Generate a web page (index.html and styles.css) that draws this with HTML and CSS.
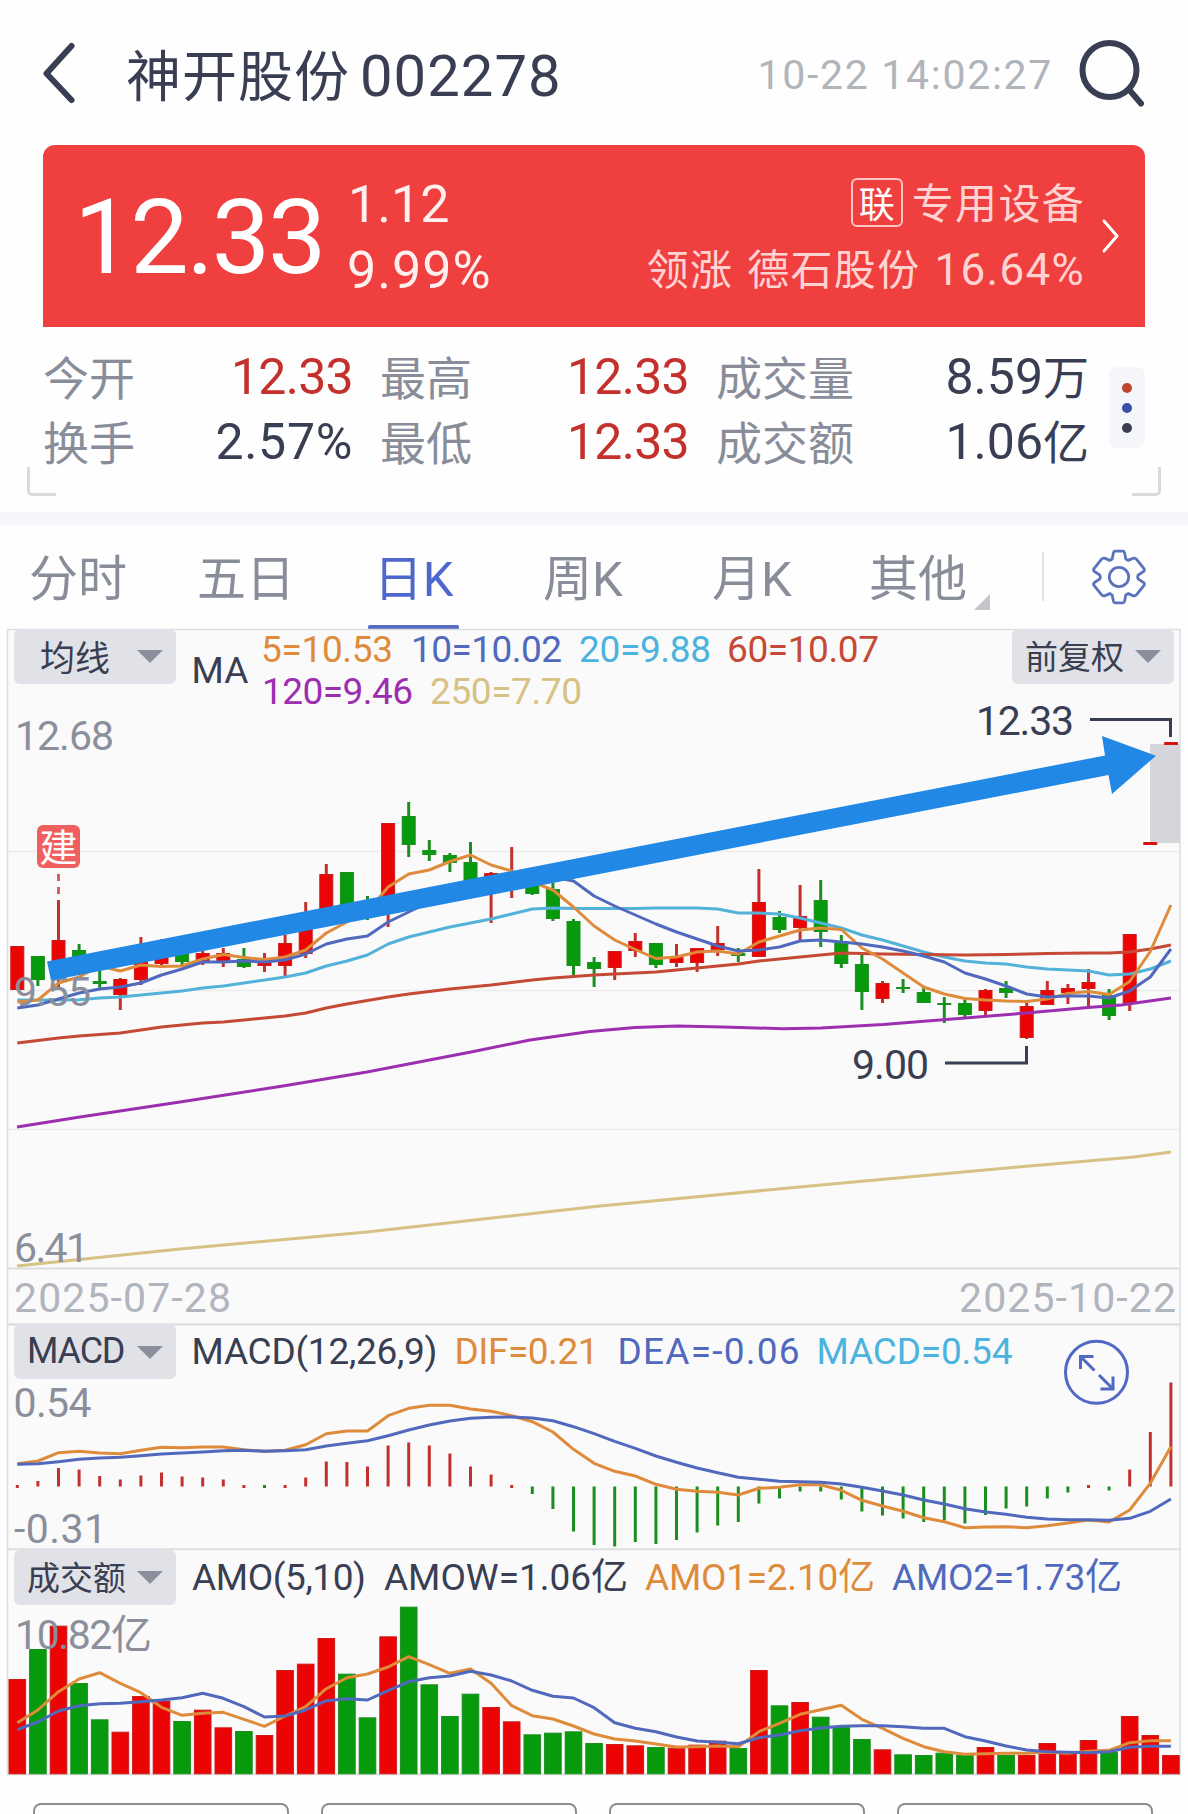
FILE: index.html
```html
<!DOCTYPE html>
<html lang="zh-CN">
<head>
<meta charset="utf-8">
<title>神开股份 002278</title>
<link rel="stylesheet" href="styles.css">
</head>
<body>
<header class="topbar">
  <svg class="back" viewBox="0 0 36 72" width="36" height="72"><path d="M30.500 9 L5.500 36.500 L30.500 63"/></svg>
  <h1 class="title"><span class="name">神开股份</span><span class="code">002278</span></h1>
  <time class="clock">10-22 14:02:27</time>
  <svg class="search" viewBox="0 0 70 70" width="70" height="70"><circle cx="31.500" cy="32" r="27"/><path d="M51 51.500 L63 65.500"/></svg>
</header>

<section class="quote">
  <div class="price">12.33</div>
  <div class="change"><span class="delta">1.12</span><span class="percent">9.99%</span></div>
  <div class="sector">
    <div class="line"><span class="badge">联</span><span class="cjk">专用设备</span></div>
    <div class="line leader"><span class="cjk">领涨</span><span class="cjk">德石股份</span><span class="num">16.64%</span></div>
  </div>
  <svg class="more" viewBox="0 0 20 36" width="20" height="36"><path d="M3 3 L16 18 L3 33"/></svg>
</section>

<section class="stats">
  <dl class="col c1"><dt>今开</dt><dd class="up">12.33</dd><dt>换手</dt><dd class="wide">2.57%</dd></dl>
  <dl class="col c2"><dt>最高</dt><dd class="up">12.33</dd><dt>最低</dt><dd class="up">12.33</dd></dl>
  <dl class="col c3"><dt>成交量</dt><dd>8.59<i>万</i></dd><dt>成交额</dt><dd>1.06<i>亿</i></dd></dl>
  <div class="dots"><b class="d1"></b><b class="d2"></b><b class="d3"></b></div>
  <span class="corner left"></span><span class="corner right"></span>
</section>

<nav class="tabs">
  <span class="tab t1">分时</span>
  <span class="tab t2">五日</span>
  <span class="tab t3 active">日K</span>
  <span class="tab t4">周K</span>
  <span class="tab t5">月K</span>
  <span class="tab t6">其他</span>
  <svg class="fold" viewBox="0 0 16 16" width="16" height="16"><path d="M16 0 V16 H0 Z"/></svg>
  <span class="rule"></span>
  <svg class="gear" viewBox="0 0 56 56" width="56" height="56"><path d="M22.5 3.5 Q22.8 2.2 24.2 2.2 H31.8 Q33.2 2.2 33.5 3.5 L34.8 9.8 Q35.5 10.7 37.2 11.4 L42.4 9.2 Q44.4 8.8 45.4 10.2 L53 19.5 Q54 21 52.6 22.4 L47.2 26 Q46 28 47.2 30 L52.6 33.6 Q54 35 53 36.5 L45.4 45.8 Q44.4 47.2 42.4 46.8 L37.2 44.6 Q35.5 45.3 34.8 46.2 L33.5 52.5 Q33.2 53.8 31.8 53.8 H24.2 Q22.8 53.8 22.5 52.5 L21.2 46.2 Q20.5 45.3 18.8 44.6 L13.6 46.8 Q11.6 47.2 10.6 45.8 L3 36.5 Q2 35 3.4 33.6 L8.8 30 Q10 28 8.8 26 L3.4 22.4 Q2 21 3 19.5 L10.6 10.2 Q11.6 8.8 13.6 9.2 L18.8 11.4 Q20.5 10.7 21.2 9.8 Z"/><circle cx="28" cy="28" r="9.7"/></svg>
</nav>

<section class="panel">
  <svg viewBox="0 629 1188 695" width="1188" height="695">
    <rect class="bg" x="7.5" y="629.5" width="1172.500" height="695"/>
    <path class="grid" d="M8 851.500H1180M8 990.500H1180M8 1129.500H1180"/>
    <path class="edge" d="M8 1268.500H1180"/>
    <rect class="gap" x="1150" y="744" width="30" height="99"/>
    <g id="candles"></g>
    <path class="ln gold" d="M17 1266L180 1249L367 1232L600 1206L810 1186L1018 1167L1134 1157L1171 1152"/>
    <path class="ln purple" d="M17 1127L80 1117L180 1102L283 1086L367 1072L471 1052L530 1040L590 1031.500L635 1027.500L677 1026L723 1027L783 1028.700L821 1028L883 1024.500L965 1018L1026 1013L1088 1007.500L1121 1005L1171 998"/>
    <g id="averages"></g>
    <path class="mark" d="M1090 719.500H1170.500V737M945 1063H1026.500V1046"/>
    <g class="axis">
      <text x="15" y="749.500" textLength="99">12.68</text>
      <text x="14" y="1005.500" textLength="77">9.55</text>
      <text x="14" y="1261.500" textLength="75">6.41</text>
    </g>
    <g class="axis date">
      <text x="14" y="1311.500" textLength="217">2025-07-28</text>
      <text x="959" y="1311.500" textLength="217">2025-10-22</text>
    </g>
    <g class="axis dark">
      <text x="976" y="734.500" textLength="98">12.33</text>
      <text x="852" y="1078.500" textLength="77">9.00</text>
    </g>
    <g class="legend">
      <text class="f-dark" x="191.500" y="683" textLength="57">MA</text>
      <text class="f-orange" x="261" y="661.500" textLength="132">5=10.53</text>
      <text class="f-blue" x="411" y="661.500" textLength="151">10=10.02</text>
      <text class="f-cyan" x="579" y="661.500" textLength="132">20=9.88</text>
      <text class="f-red" x="727" y="661.500" textLength="152">60=10.07</text>
      <text class="f-purple" x="262" y="703.500" textLength="151">120=9.46</text>
      <text class="f-gold" x="430" y="703.500" textLength="152">250=7.70</text>
    </g>
    <path class="dash" d="M58.500 874V881M58.500 887V894"/>
    <rect class="tag" x="37" y="825" width="43" height="43" rx="6"/>
    <text class="tagtext" x="58.500" y="860.500">建</text>
    <path class="arrow" d="M47 961.500L1105 755.500L1102 736L1156 755.700L1112 794L1108.500 775L51 980.500Z"/>
  </svg>
  <button class="pick first">均线<i></i></button>
  <button class="pick adjust">前复权<i></i></button>
</section>

<section class="panel">
  <svg viewBox="0 1324 1188 226" width="1188" height="226">
    <rect class="bg" x="7.5" y="1324.500" width="1172.500" height="225"/>
    <path class="edge" d="M8 1324.500H1180M8 1549.500H1180"/>
    <g id="hist"></g>
    <g id="macd"></g>
    <g class="axis">
      <text x="13.500" y="1416.500" textLength="78">0.54</text>
      <text x="14" y="1543" textLength="93">-0.31</text>
    </g>
    <g class="legend">
      <text class="f-dark" x="191.500" y="1363.500" textLength="246">MACD(12,26,9)</text>
      <text class="f-orange" x="454.500" y="1363.500" textLength="144">DIF=0.21</text>
      <text class="f-blue" x="617.500" y="1363.500" textLength="182">DEA=-0.06</text>
      <text class="f-cyan" x="816.500" y="1363.500" textLength="196">MACD=0.54</text>
    </g>
    <g class="expand"><ellipse cx="1096.500" cy="1372.300" rx="31" ry="31"/><path d="M1094.500 1370.500L1080.500 1356.500M1080.500 1369V1356.500H1093.500M1099 1375L1113 1389M1100.500 1389H1113V1376.500"/></g>
  </svg>
  <button class="pick macd">MACD<i></i></button>
</section>

<section class="panel">
  <svg viewBox="0 1550 1188 225" width="1188" height="225">
    <rect class="bg" x="7.5" y="1549.500" width="1172.500" height="225"/>
    <g id="volume"></g>
    <g id="amo"></g>
    <g class="axis"><text x="15" y="1648.500" textLength="137">10.82亿</text></g>
    <g class="legend">
      <text class="f-dark" x="192" y="1589.500" textLength="174">AMO(5,10)</text>
      <text class="f-dark" x="384" y="1589.500" textLength="244">AMOW=1.06亿</text>
      <text class="f-orange" x="645" y="1589.500" textLength="230">AMO1=2.10亿</text>
      <text class="f-blue" x="892" y="1589.500" textLength="230">AMO2=1.73亿</text>
    </g>
  </svg>
  <button class="pick">成交额<i></i></button>
</section>

<footer class="actions"><span></span><span></span><span></span><span></span></footer>
<script src="charts.js"></script>
</body>
</html>
```
FILE: styles.css
```css
* { box-sizing: border-box; }
html, body { margin: 0; padding: 0; }
body {
  width: 1188px;
  height: 1814px;
  overflow: hidden;
  background: #fefefe;
  color: #393e53;
  font-family: Roboto, "Noto Sans CJK SC", sans-serif;
}
svg { display: block; flex: none; overflow: visible; }
i { font-style: normal; }

.topbar { display: flex; align-items: center; height: 145px; padding: 0 40px 0 41px; }
.back, .search, .more { fill: none; stroke: #393e53; stroke-width: 6; stroke-linecap: round; stroke-linejoin: round; }
.title { display: flex; align-items: baseline; margin: 8px 0 0 49px; font-weight: 400; line-height: 80px; }
.name { font-size: 55px; letter-spacing: 1px; }
.code { margin-left: 10px; font-size: 58px; letter-spacing: 1px; }
.clock { margin: 4px 0 0 auto; color: #b0b4bb; font-size: 41px; letter-spacing: 1.7px; white-space: pre; }
.search { margin-left: 25px; }

.quote {
  display: flex;
  height: 182px;
  margin: 0 43px;
  padding-left: 31px;
  border-radius: 12px 12px 0 0;
  background: #f03f3f;
  color: #fff;
}
.price { width: 273px; padding-top: 32px; font-size: 104px; line-height: 122px; letter-spacing: -2.2px; }
.change { display: flex; flex-direction: column; padding-top: 27px; font-size: 52px; line-height: 66px; color: #fff0f0; }
.percent { letter-spacing: 1px; }
.delta { padding-left: 1px; }
.sector { display: flex; flex-direction: column; align-items: flex-end; margin-left: auto; padding-top: 26px; font-size: 42px; letter-spacing: 1.3px; color: #ffd3d2; }
.line { display: flex; align-items: center; height: 66px; }
.cjk { margin-top: -7px; }
.badge { display: flex; align-items: center; justify-content: center; width: 52px; height: 49px; margin: -3px 9px 0 0; padding-bottom: 2px; border: 2px solid #ffc5c5; border-radius: 6px; color: #fff; font-size: 36px; letter-spacing: 0; }
.leader span + span { margin-left: 14px; }
.num { font-size: 44px; }
.more { margin: 73px 24px 0 16px; stroke: #fff; stroke-width: 3; }

.stats { position: relative; display: flex; height: 185px; padding: 18px 0 0 43px; }
.col { display: grid; grid-template-columns: auto auto; grid-auto-rows: 65px; justify-content: space-between; align-items: center; margin: 0; line-height: 65px; }
.c1 { width: 310px; }
.c2 { width: 309px; margin-left: 27px; }
.c3 { width: 373px; margin-left: 27px; }
dt { padding-top: 3px; color: #888d99; font-size: 46px; }
dd { margin: 0; font-size: 50px; text-align: right; }
dd i { font-size: 46px; }
.wide { letter-spacing: .7px; }
.up { color: #c4302b; letter-spacing: -.7px; }
.dots { display: flex; flex-direction: column; align-items: center; justify-content: center; gap: 10px; width: 36px; height: 81px; margin: 22px 0 0 20px; border-radius: 8px; background: #f4f6f9; }
.dots b { width: 10px; height: 10px; border-radius: 50%; }
.d1 { background: #c3452f; }
.d2 { background: #3b4fa8; }
.d3 { background: #393e53; }
.corner { position: absolute; top: 140px; width: 29px; height: 29px; border: solid #d8dade; }
.corner.left { left: 27px; border-width: 0 0 3px 3px; border-radius: 0 0 0 5px; }
.corner.right { right: 27px; border-width: 0 3px 3px 0; border-radius: 0 0 5px 0; }

.tabs { position: relative; display: flex; align-items: flex-start; height: 117px; border-top: 13px solid #f5f6f9; padding-left: 29px; color: #888d99; font-size: 49px; line-height: 110px; }
.tab { height: 104px; }
.t1 { width: 168px; }
.t2 { width: 171px; }
.t3 { width: 91px; text-align: center; }
.t4 { width: 86px; margin-left: 84px; }
.t5 { width: 86px; margin-left: 83px; }
.t6 { width: 98px; margin-left: 71px; }
.active { position: relative; color: #4e67cc; }
.active::after { content: ""; position: absolute; left: 0; bottom: -1px; width: 91px; height: 5px; border-radius: 2px; background: #566cc2; }
.fold { margin: 69px 0 0 7px; fill: #c4c5c8; }
.rule { width: 2px; height: 49px; margin: 27px 0 0 52px; background: #e3e4e8; }
.gear { margin: 24px 0 0 47px; fill: none; stroke: #5a73bd; stroke-width: 2.8; }

.panel { position: relative; }
.bg { fill: #fafafa; stroke: #dcdde0; stroke-width: 1.5; }
.grid { stroke: #ececed; stroke-width: 1.5; }
.edge { stroke: #dcdde0; stroke-width: 2; }
.gap { fill: #d5d6dc; }
.up-body, .dn-body { stroke-width: 1; }
.up-body { fill: #eb0403; stroke: #cb1c1a; }
.dn-body { fill: #069a0c; stroke: #1c8e20; }
.up-wick { stroke: #c2312d; stroke-width: 3; }
.dn-wick { stroke: #1c8e20; stroke-width: 3; }
.ln { fill: none; stroke-width: 3; stroke-linejoin: round; }
.orange { stroke: #df8b3c; }
.blue { stroke: #5069bd; }
.cyan { stroke: #52b2d9; }
.red { stroke: #c64936; }
.purple { stroke: #9c2fb0; }
.gold { stroke: #d8c184; }
.f-dark { fill: #393e53; }
.f-orange { fill: #df8b3c; }
.f-blue { fill: #5069bd; }
.f-cyan { fill: #4bb3de; }
.f-red { fill: #c64936; }
.f-purple { fill: #9c2fb0; }
.f-gold { fill: #d8c184; }
.mark { fill: none; stroke: #393e53; stroke-width: 3; }
.axis { font-size: 41px; fill: #8a8f9b; }
.date { fill: #b1b5bd; }
.dark { fill: #393e53; }
.legend { font-size: 37px; }
.dash { stroke: #d9605e; stroke-width: 3; }
.tag { fill: #ef5f5e; }
.tagtext { fill: #fff; font-size: 38px; text-anchor: middle; }
.arrow { fill: #2288e5; }
.expand { fill: none; stroke: #5169c4; stroke-width: 3; }

.pick { position: absolute; top: 0; left: 14px; display: flex; align-items: center; justify-content: space-between; width: 162px; height: 55px; padding: 0 13px 3px; border: 0; border-radius: 6px; background: #e1e2e7; color: #393e53; font: 33px Roboto, "Noto Sans CJK SC", sans-serif; }
.pick i { border: solid transparent; border-width: 13px 13px 0; border-top-color: #8b8f9c; margin-top: 3px; }
.first { padding-left: 26px; font-size: 35px; }
.adjust { left: 1012px; }
.macd { padding-bottom: 1px; font-size: 36px; letter-spacing: -1.2px; }

.actions { display: flex; gap: 32.500px; padding: 28px 33px 0; }
.actions span { width: 255.500px; height: 40px; border: 2px solid #8b8e93; border-radius: 8px; }
```
FILE: charts.js
```js
const X0 = 17.3, STEP = 20.6;
const xAt = i => X0 + i * STEP;

// direction, high, low, body top, body bottom
const candles = [
  ['u',946,990,946,990],['d',956,986,956,980],['u',900,988,940,975],['d',944,975,950,965],['d',960,989,981,984],
  ['u',978,1010,979,995],['u',937,985,950,980],['u',939,967,957,964],['d',953,965,953,962],['u',951,965,953,961],
  ['u',948,967,953,961],['d',948,968,959,967],['u',953,972,962,966],['u',935,976,943,966],['u',902,958,913,954],
  ['u',864,920,874,920],['d',872,910,872,910],['d',896,920,905,912],['u',823,927,823,905],['d',802,857,816,845],
  ['d',840,861,850,855],['d',853,872,855,863],['d',842,885,862,885],['u',872,923,873,885],['u',847,898,875,880],
  ['d',885,895,885,894],['d',883,921,889,919],['d',919,975,921,966],['d',957,987,962,969],['u',951,980,951,968],
  ['u',933,957,941,951],['d',943,968,943,965],['u',944,967,957,963],['u',948,972,948,963],['u',926,956,943,950],
  ['d',948,962,953,956],['u',869,957,902,957],['d',911,933,917,930],['u',885,941,916,928],['d',880,947,900,932],
  ['d',935,968,941,964],['d',955,1010,964,992],['u',981,1003,983,999],['d',979,993,987,989],['d',987,1003,992,1003],
  ['d',997,1023,1003,1005],['d',1000,1017,1003,1015],['u',989,1015,990,1011],['d',981,998,988,993],['u',1002,1039,1006,1038],
  ['u',981,1005,990,1005],['u',984,1004,988,993],['u',969,1007,982,989],['d',989,1020,995,1016],['u',934,1011,934,1003],
  ['u',842,845,842,845],['u',742,745,742,745]
];
const ma5 = [1002,1000,983,977,966,971,965,966.5,966,959,954.5,957.5,959.5,957,950,933,922,912,887,874,870,861.5,855,865,871,882,890,907,926,940,949.5,958.5,957,952,951,954,942,936,930,928,929.5,948,959,973,987,994,998.5,1000,1001,1001.5,999,993.5,991.5,994.5,981.5,951.5,905];
const ma10 = [1008,1005,999,993,989,987,983,975,969,962,962,961,962,960,954,944,939,936,922,912,902,895,888,884,880,877,877,881,896,906,915,924,932,939,946,951,950,947,941,940,942,944,947,951,956,962,973,979,986,994,997,996,996,998,991,977,949];
const ma20 = [1000,1000,1000,999.7,998,997,995,993,991,988,986,983,980,977,973,966,961,955,944,937,932,927,923,919,914,909,908,908.5,908.5,908.5,908.5,908,908,908,909,913,913,914,918,923,928,935,940,946,952,957,961,963,964,967,969,970,971,975,974,969,961];
const ma60 = [1043,1040.5,1038,1036,1034.5,1033,1030,1027,1025,1023,1022,1020,1018,1016,1013,1008,1004,1000.5,997,994,991.5,989,987,985,982.5,980,978,976.5,975,974,973,972,970,968,966,964,961,959,957,955,953,953.5,954,954.3,954.5,954.8,955,954.8,954.5,954,953.5,953.3,953,953,952,949,945];

// MACD histogram heights above (+) or below (-) the zero line
const hist = [1,5.5,18.5,17,10.5,7,11,14,10,9,7,1,-1,1,9,25,24.5,20,41,44,41,33,20,12,1,-7.5,-22.5,-45,-58.5,-60,-55.5,-57.5,-53.5,-46,-39,-35.5,-17,-12,-5,-5,-13,-25,-29,-32,-35.5,-34,-37,-28.5,-22,-20,-12,-6,1,-4,17,54.5,104];

// lower panel series, stored in thirds of a pixel below y = 1310
const dif = [461,453,428,424,429,431,421,412,413,411,411,419,424,421,404,371,363,363,317,295,286,286,297,304,317,335,366,418,460,484,498,523,538,544,547,555,535,532,524,524,541,571,588,604,623,635,653,651,650,653,647,639,630,636,600,520,410];
const dea = [463,461,455,448,444,442,437,432,429,426,422,421,424,422,419,408,400,392,377,360,345,333,325,322,321,324,332,350,371,394,415,438,457,474,488,502,508,514,515,517,522,532,543,555,570,582,596,606,613,622,627,629,629,631,625,604,567];
const volume = 'u1107 d1017 u947 d1119 d1228 u1265 u1158 u1172 d1233 u1199 u1252 d1263 u1275 u1080 u1061 u984 d1091 d1222 u979 d890 d1123 d1218 d1151 u1191 u1234 d1273 d1268 d1264 d1299 u1302 u1306 d1311 u1313 u1304 u1292 d1314 u1080 d1186 u1176 d1220 d1249 d1287 u1318 d1333 d1335 d1328 d1335 u1311 d1335 u1335 u1299 u1325 u1290 d1325 u1218 u1275 u1335'.split(' ');
const amo1 = [1238,1200,1145,1107,1088,1120,1148,1192,1216,1210,1207,1228,1249,1218,1190,1136,1103,1092,1071,1040,1064,1090,1077,1120,1187,1217,1227,1248,1272,1287,1293,1302,1311,1310,1308,1310,1265,1240,1213,1199,1186,1228,1255,1285,1310,1325,1333,1331,1330,1330,1327,1330,1324,1321,1298,1292,1292];
const amo2 = [1259,1236,1203,1187,1181,1180,1175,1170,1163,1150,1165,1190,1221,1218,1200,1172,1166,1170,1142,1115,1103,1098,1084,1095,1113,1141,1159,1164,1193,1238,1255,1265,1281,1293,1297,1301,1283,1275,1262,1254,1249,1247,1247,1250,1255,1255,1280,1293,1308,1320,1325,1327,1328,1325,1312,1309,1309];
const third = v => 1310 + v / 3;

const put = (id, markup) => { document.getElementById(id).innerHTML = markup; };
const cls = d => (d === 'u' ? 'up' : 'dn');
const line = (name, ys) => `<polyline class="ln ${name}" points="${ys.map((y, i) => `${xAt(i).toFixed(1)},${y.toFixed(1)}`).join(' ')}"/>`;
const stick = (kind, x, a, b) => `<line class="${kind}-wick" x1="${x}" x2="${x}" y1="${a}" y2="${b}"/>`;
const block = (kind, x, w, a, b) => `<rect class="${kind}-body" x="${x - w / 2}" y="${a + .5}" width="${w}" height="${Math.max(1, b - a - 1)}"/>`;

put('candles', candles.map(([d, hi, lo, a, b], i) => stick(cls(d), xAt(i), hi, lo) + block(cls(d), xAt(i), 13, a, b)).join(''));
put('averages', line('cyan', ma20) + line('red', ma60) + line('orange', ma5) + line('blue', ma10));
put('hist', hist.map((h, i) => Math.abs(h) === 1
  ? stick(h > 0 ? 'up' : 'dn', xAt(i), 1485, 1488)
  : stick(h > 0 ? 'up' : 'dn', xAt(i), 1486.5, 1486.5 - h)).join(''));
put('macd', line('orange', dif.map(third)) + line('blue', dea.map(third)));
put('volume', volume.map((s, i) => block(cls(s[0]), xAt(i), 16.6, third(+s.slice(1)), 1774.3)).join(''));
put('amo', line('orange', amo1.map(third)) + line('blue', amo2.map(third)));
```
